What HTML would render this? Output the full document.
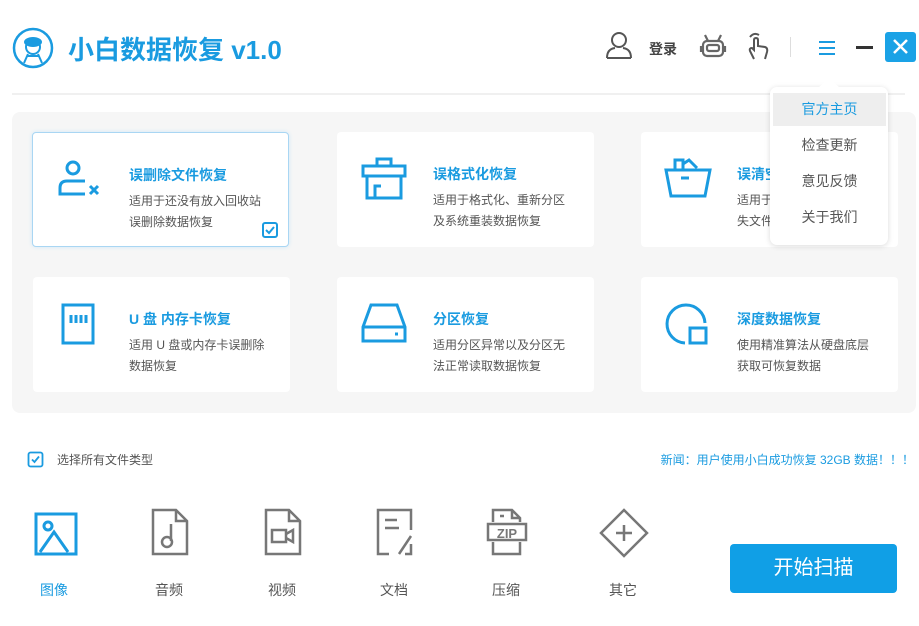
<!DOCTYPE html>
<html><head><meta charset="utf-8"><style>
*{margin:0;padding:0;box-sizing:border-box}
body{width:919px;height:626px;background:#fff;position:relative;overflow:hidden;font-family:"Liberation Sans","Noto Sans CJK SC",sans-serif;}
.a{position:absolute}
.card{position:absolute;width:257px;height:115px;background:#fff;border-radius:4px}
.card .t{position:absolute;left:96px;top:32px;font-size:14px;color:#1a9be0;font-weight:bold}
.card .d{position:absolute;left:96px;top:58px;font-size:12px;color:#555;line-height:21px;white-space:nowrap}
.card svg{position:absolute;left:22px;top:24px}
.lbl{position:absolute;top:580px;font-size:14px;color:#555;width:60px;text-align:center}
.mi{position:absolute;left:3px;width:113px;height:33px;line-height:33px;text-align:center;font-size:14px;color:#555}
</style></head><body>
<svg class="a" style="left:12px;top:27px" width="42" height="42" viewBox="0 0 42 42"><circle cx="21" cy="21" r="19" fill="none" stroke="#1a9be0" stroke-width="2.5"/><ellipse cx="21" cy="15" rx="9" ry="5" fill="#1a9be0"/><circle cx="21" cy="20" r="7" fill="none" stroke="#1a9be0" stroke-width="2"/><path d="M12 36 L16 27 M30 36 L26 27 M15 29 H27" stroke="#1a9be0" stroke-width="2" fill="none"/></svg>
<div class="a" style="left:68px;top:30px;font-size:26px;font-weight:bold;color:#1a9be0">小白数据恢复 v1.0</div>

<svg class="a" style="left:604px;top:30px" width="30" height="30" viewBox="0 0 30 30" fill="none" stroke="#555" stroke-width="2"><circle cx="15" cy="10" r="7"/><path d="M3 28 Q3 19 11 18 M27 28 Q27 19 19 18 M3 28 H27"/></svg>
<div class="a" style="left:649px;top:39px;font-size:14px;color:#444;font-weight:bold">登录</div>
<svg class="a" style="left:699px;top:32px" width="28" height="28" viewBox="0 0 28 28" fill="none" stroke="#666" stroke-width="2.2"><rect x="4" y="9" width="20" height="15" rx="4"/><rect x="8" y="13" width="12" height="6" rx="2"/><path d="M9 9 L6 3 M19 9 L22 3 M2 14 V20 M26 14 V20"/></svg>
<svg class="a" style="left:745px;top:31px" width="26" height="30" viewBox="0 0 26 30" fill="none" stroke="#555" stroke-width="2"><path d="M9 28 L5 20 Q4 17 7 17 L9 19 V9 Q9 7 11 7 Q13 7 13 9 V15 L20 16 Q23 17 22 21 L20 28"/><path d="M5 6 Q9 1 14 4"/></svg>
<div class="a" style="left:790px;top:37px;width:1px;height:20px;background:#ddd"></div>
<svg class="a" style="left:818px;top:39px" width="18" height="18" viewBox="0 0 18 18" stroke="#1a9be0" stroke-width="2"><path d="M1 3H17M1 9H17M1 15H17"/></svg>
<div class="a" style="left:856px;top:46px;width:17px;height:2.5px;background:#333"></div>
<div class="a" style="left:885px;top:32px;width:31px;height:30px;background:#1aa2e6;border-radius:3px"><svg width="31" height="30" viewBox="0 0 31 30" stroke="#fff" stroke-width="2.5"><path d="M9 8L22 21M22 8L9 21"/></svg></div>

<div class="a" style="left:12px;top:93px;width:893px;height:2px;background:#f0f0f0"></div>
<div class="a" style="left:12px;top:112px;width:904px;height:301px;background:#f6f6f6;border-radius:8px"></div>

<div class="card" style="left:32px;top:132px;border:1.5px solid #a9d6f3;box-shadow:0 0 4px #cfe8f8">
<svg width="46" height="46" viewBox="0 0 46 46" fill="none" stroke="#1a9be0" stroke-width="3"><circle cx="18" cy="11" r="6"/><path d="M30 24 H12 Q5 24 5 31 V37 H30"/><path d="M35 29 L43 37 M43 29 L35 37"/></svg>
<div class="t">误删除文件恢复</div><div class="d">适用于还没有放入回收站<br>误删除数据恢复</div>
<svg class="a" style="left:228px;top:88px" width="18" height="18" viewBox="0 0 18 18" fill="none" stroke="#1a9be0" stroke-width="2"><rect x="2" y="2" width="14" height="14" rx="2"/><path d="M5 9 L8 12 L13 6"/></svg>
</div>
<div class="card" style="left:337px;top:132px"><svg width="50" height="46" viewBox="0 0 50 46" fill="none" stroke="#1a9be0" stroke-width="3"><path d="M18 10 V3 H32 V10 M4 10 H46 V20 H4 Z M8 20 V42 H42 V20 M16 42 V30 H22"/></svg>
<div class="t">误格式化恢复</div><div class="d">适用于格式化、重新分区<br>及系统重装数据恢复</div></div>
<div class="card" style="left:641px;top:132px"><svg width="50" height="46" viewBox="0 0 50 46" fill="none" stroke="#1a9be0" stroke-width="3"><path d="M3 14 H47 L42 40 H8 Z M18 22 H26 M12 14 V4 H20 V14 M20 8 L26 4 L34 12"/></svg>
<div class="t">误清空回收站</div><div class="d">适用于清空回收站丢<br>失文件恢复</div></div>
<div class="card" style="left:33px;top:277px"><svg width="46" height="46" viewBox="0 0 46 46" fill="none" stroke="#1a9be0" stroke-width="3"><path d="M8 4 H38 V42 H8 V14 Z M16 14 V22 M21 14 V22 M26 14 V22 M31 14 V22"/></svg>
<div class="t">U 盘 内存卡恢复</div><div class="d">适用 U 盘或内存卡误删除<br>数据恢复</div></div>
<div class="card" style="left:337px;top:277px"><svg width="50" height="46" viewBox="0 0 50 46" fill="none" stroke="#1a9be0" stroke-width="3"><path d="M12 4 H38 L46 26 V40 H4 V26 Z M4 26 H46 M36 33 H39"/></svg>
<div class="t">分区恢复</div><div class="d">适用分区异常以及分区无<br>法正常读取数据恢复</div></div>
<div class="card" style="left:641px;top:277px"><svg width="50" height="46" viewBox="0 0 50 46" fill="none" stroke="#1a9be0" stroke-width="3"><path d="M42 22 A19 19 0 1 0 22 42"/><rect x="27" y="27" width="16" height="15"/></svg>
<div class="t">深度数据恢复</div><div class="d">使用精准算法从硬盘底层<br>获取可恢复数据</div></div>

<div class="a" style="left:770px;top:87px;width:118px;height:158px;background:#fff;border-radius:7px;box-shadow:0 1px 6px rgba(0,0,0,.15)">
<div class="a" style="left:52px;top:-7px;width:14px;height:14px;background:#fff;transform:rotate(45deg)"></div>
<div class="mi" style="top:6px;background:#eee;color:#1a9be0">官方主页</div>
<div class="mi" style="top:42px">检查更新</div>
<div class="mi" style="top:78px">意见反馈</div>
<div class="mi" style="top:114px">关于我们</div>
</div>

<svg class="a" style="left:27px;top:451px" width="17" height="17" viewBox="0 0 17 17" fill="none" stroke="#1a9be0" stroke-width="1.8"><rect x="1.5" y="1.5" width="14" height="14" rx="2"/><path d="M5 8.5 L7.5 11 L12 5.5"/></svg>
<div class="a" style="left:57px;top:451px;font-size:12px;color:#555">选择所有文件类型</div>
<div class="a" style="right:5px;top:451px;font-size:12px;color:#1a9be0">新闻：用户使用小白成功恢复 32GB 数据！！！</div>

<svg class="a" style="left:34px;top:512px" width="44" height="44" viewBox="0 0 44 44" fill="none" stroke="#1a9be0" stroke-width="3"><rect x="2" y="2" width="40" height="40"/><circle cx="14" cy="14" r="4"/><path d="M6 40 L20 20 L34 40"/></svg>
<svg class="a" style="left:150px;top:508px" width="40" height="48" viewBox="0 0 40 48" fill="none" stroke="#777" stroke-width="2.5"><path d="M3 2 H26 L37 13 V46 H3 Z M26 2 V13 H37 M21 16 V33"/><circle cx="17" cy="34" r="5"/></svg>
<svg class="a" style="left:263px;top:508px" width="40" height="48" viewBox="0 0 40 48" fill="none" stroke="#777" stroke-width="2.5"><path d="M3 2 H26 L37 13 V46 H3 Z M26 2 V13 H37"/><rect x="9" y="22" width="14" height="12"/><path d="M23 26 L30 22 V34 L23 30"/></svg>
<svg class="a" style="left:375px;top:508px" width="40" height="48" viewBox="0 0 40 48" fill="none" stroke="#777" stroke-width="2.5"><path d="M14 46 H3 V2 H36 V22 M10 12 H22 M10 20 H24 M36 28 L24 46 M36 36 V46 H30"/></svg>
<svg class="a" style="left:486px;top:508px" width="42" height="48" viewBox="0 0 42 48" fill="none" stroke="#777" stroke-width="2.5"><path d="M7 14 V2 H26 L34 10 V14 M26 2 V10 H34 M7 34 V46 H34 V34 M14 8 H18"/><rect x="2" y="16" width="38" height="16"/><text x="21" y="30" font-size="13" font-weight="bold" text-anchor="middle" fill="#777" stroke="none" font-family="Liberation Sans">ZIP</text></svg>
<svg class="a" style="left:599px;top:508px" width="50" height="50" viewBox="0 0 50 50" fill="none" stroke="#777" stroke-width="2.5"><path d="M25 2 L48 25 L25 48 L2 25 Z M25 17 V33 M17 25 H33"/></svg>
<div class="lbl" style="left:24px;color:#1a9be0">图像</div>
<div class="lbl" style="left:139px">音频</div>
<div class="lbl" style="left:252px">视频</div>
<div class="lbl" style="left:364px">文档</div>
<div class="lbl" style="left:476px">压缩</div>
<div class="lbl" style="left:593px">其它</div>

<div class="a" style="left:730px;top:544px;width:167px;height:49px;background:#109fe6;border-radius:4px;color:#fff;font-size:20px;text-align:center;line-height:49px">开始扫描</div>
</body></html>
